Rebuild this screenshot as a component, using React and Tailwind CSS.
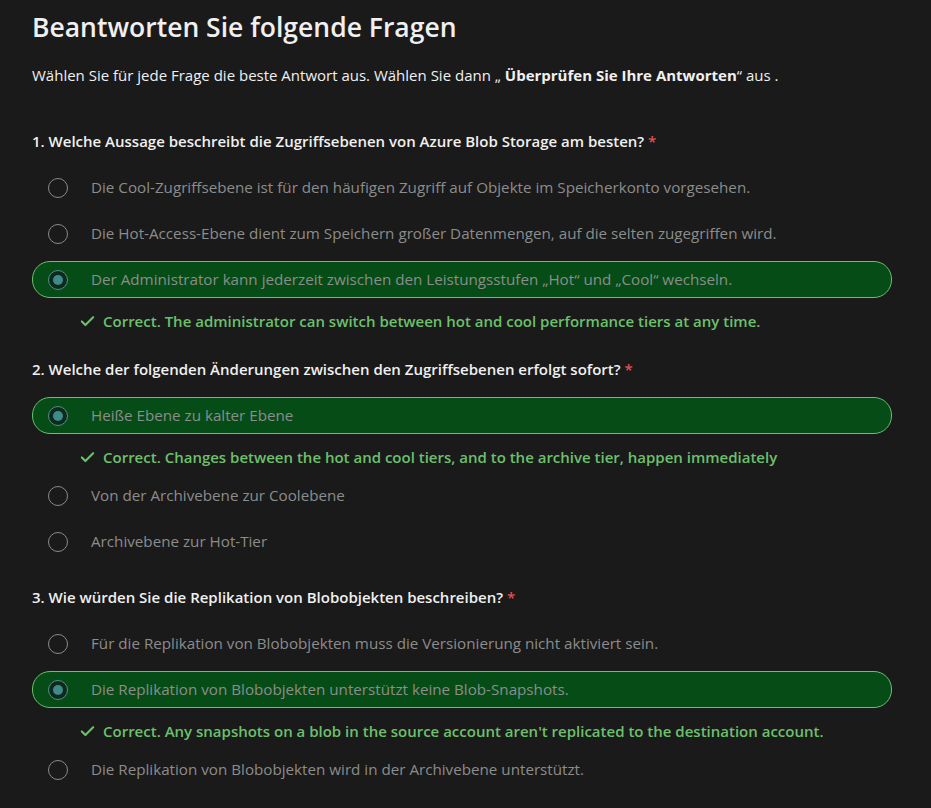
import { Check } from 'lucide-react'

const questions = [
  {
    title: '1. Welche Aussage beschreibt die Zugriffsebenen von Azure Blob Storage am besten?',
    options: [
      { text: 'Die Cool-Zugriffsebene ist für den häufigen Zugriff auf Objekte im Speicherkonto vorgesehen.' },
      { text: 'Die Hot-Access-Ebene dient zum Speichern großer Datenmengen, auf die selten zugegriffen wird.' },
      {
        text: 'Der Administrator kann jederzeit zwischen den Leistungsstufen „Hot“ und „Cool“ wechseln.',
        selected: true,
        feedback: 'Correct. The administrator can switch between hot and cool performance tiers at any time.'
      }
    ]
  },
  {
    title: '2. Welche der folgenden Änderungen zwischen den Zugriffsebenen erfolgt sofort?',
    options: [
      {
        text: 'Heiße Ebene zu kalter Ebene',
        selected: true,
        feedback: 'Correct. Changes between the hot and cool tiers, and to the archive tier, happen immediately'
      },
      { text: 'Von der Archivebene zur Coolebene' },
      { text: 'Archivebene zur Hot-Tier' }
    ]
  },
  {
    title: '3. Wie würden Sie die Replikation von Blobobjekten beschreiben?',
    options: [
      { text: 'Für die Replikation von Blobobjekten muss die Versionierung nicht aktiviert sein.' },
      {
        text: 'Die Replikation von Blobobjekten unterstützt keine Blob-Snapshots.',
        selected: true,
        feedback: "Correct. Any snapshots on a blob in the source account aren't replicated to the destination account."
      },
      { text: 'Die Replikation von Blobobjekten wird in der Archivebene unterstützt.' }
    ]
  }
]

function Radio({ selected }) {
  if (selected) {
    return (
      <span className="flex h-[20px] w-[20px] shrink-0 items-center justify-center rounded-full border border-[#4f9090] bg-[#0f2a1a]">
        <span className="h-[10px] w-[10px] rounded-full bg-[#3f8a8a]" />
      </span>
    )
  }
  return <span className="h-[20px] w-[20px] shrink-0 rounded-full border border-[#8a8a8a]" />
}

function Option({ option }) {
  return (
    <div>
      <div
        className={
          option.selected
            ? 'flex h-[37px] items-center gap-[23px] rounded-[18px] border border-[#6cbf6c] bg-[#054c16] pl-[15px]'
            : 'flex h-[37px] items-center gap-[23px] rounded-[18px] border border-transparent pl-[15px]'
        }
      >
        <Radio selected={option.selected} />
        <span className="text-[15.2px] text-[#8c8c8c]">{option.text}</span>
      </div>
      {option.feedback && (
        <div className="flex h-[34px] items-start gap-[7px] pl-[47px] pt-[13px] text-[15px] font-semibold leading-[20px] text-[#6cc06c]">
          <Check size={17} strokeWidth={3} className="mt-[2px] shrink-0" />
          <span>{option.feedback}</span>
        </div>
      )}
    </div>
  )
}

export default function App() {
  return (
    <div
      className="min-h-screen bg-[#1a1a1a] pl-[32px] pr-[39px] pt-[8px] text-[#f0f0f0]"
      style={{ fontFamily: '"Open Sans", "Noto Sans", sans-serif' }}
    >
      <h1 className="text-[26.5px] font-semibold leading-[38px]">Beantworten Sie folgende Fragen</h1>
      <p className="mt-[18px] text-[15px] leading-[22px]">
        Wählen Sie für jede Frage die beste Antwort aus. Wählen Sie dann „ <b>Überprüfen Sie Ihre Antworten</b>“ aus .
      </p>

      <div className="mt-[45px] flex flex-col gap-[27px]">
        {questions.map((q) => (
          <div key={q.title}>
            <h2 className="text-[15px] font-semibold leading-[20px]">
              {q.title} <span className="text-[#e05050]">*</span>
            </h2>
            <div className="mt-[18px] flex flex-col gap-[9px]">
              {q.options.map((o) => (
                <Option key={o.text} option={o} />
              ))}
            </div>
          </div>
        ))}
      </div>
    </div>
  )
}
